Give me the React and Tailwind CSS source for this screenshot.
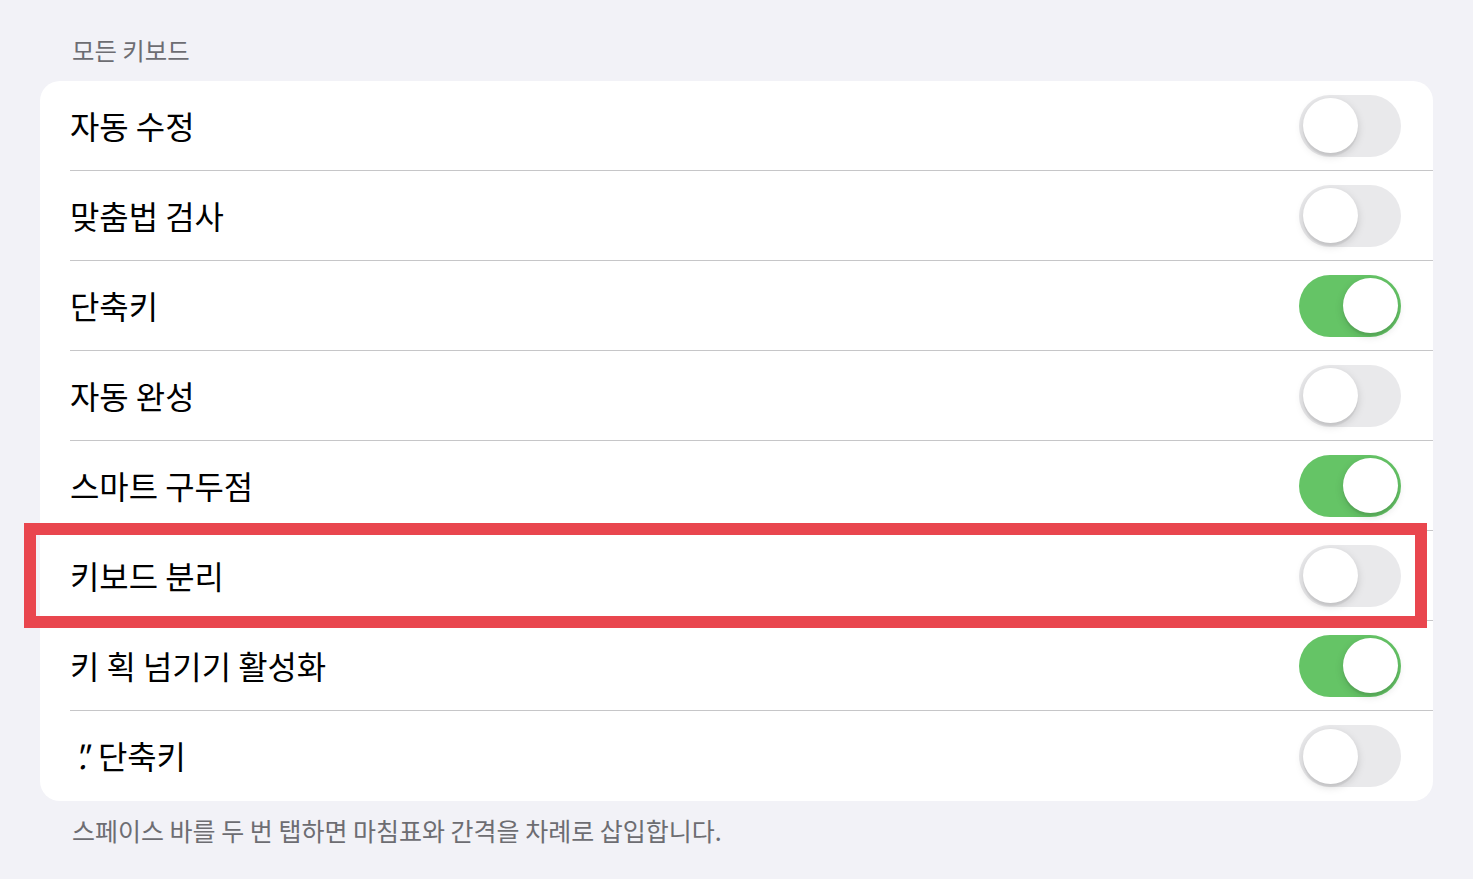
import React from "react";

const rows = [
  { label: "자동 수정", on: false },
  { label: "맞춤법 검사", on: false },
  { label: "단축키", on: true },
  { label: "자동 완성", on: false },
  { label: "스마트 구두점", on: true },
  { label: "키보드 분리", on: false, highlight: true },
  { label: "키 획 넘기기 활성화", on: true },
  { label: "period", on: false },
];

function Toggle({ on }) {
  return (
    <div
      className={
        "flex items-center px-[3.5px] w-[102px] h-[62px] rounded-full shrink-0 " +
        (on ? "bg-[#65c466] justify-end" : "bg-[#e9e9eb] justify-start")
      }
    >
      <div className="w-[55px] h-[55px] rounded-full bg-white shadow-[0_3px_8px_rgba(0,0,0,0.15),0_3px_1px_rgba(0,0,0,0.06)]" />
    </div>
  );
}

export default function App() {
  return (
    <div
      className="w-[1473px] h-[879px] bg-[#f2f2f7] overflow-hidden pt-[36px]"
      style={{ fontFamily: '"Noto Sans CJK KR", "Noto Sans", sans-serif' }}
    >
      <div className="pl-[72px] h-[28px] leading-[28px] text-[24.4px] text-[#6d6d72]">
        모든 키보드
      </div>
      <div className="mx-[40px] mt-[17px] bg-white rounded-[20px]">
        {rows.map((r, i) => (
          <div key={i} className="relative h-[90px] pl-[30px]">
            <div
              className={
                "h-full flex items-center justify-between pr-[32px] " +
                (i < rows.length - 1 ? "border-b border-[#c6c6c8]" : "")
              }
            >
              <div className="text-[31.9px] text-black leading-none">
                {r.label === "period" ? (
                  <span className="flex items-baseline">
                    <span className="italic tracking-[-6px] ml-[3px] mr-[17px]">".</span>
                    <span>단축키</span>
                  </span>
                ) : (
                  r.label
                )}
              </div>
              <Toggle on={r.on} />
            </div>
            {r.highlight && (
              <div className="absolute -top-[8px] -left-[16px] w-[1403px] h-[105px] border-[12px] border-[#e9464e] pointer-events-none" />
            )}
          </div>
        ))}
      </div>
      <div className="pl-[72px] mt-[15px] h-[28px] leading-[28px] text-[25px] text-[#6d6d72]">
        스페이스 바를 두 번 탭하면 마침표와 간격을 차례로 삽입합니다.
      </div>
    </div>
  );
}
